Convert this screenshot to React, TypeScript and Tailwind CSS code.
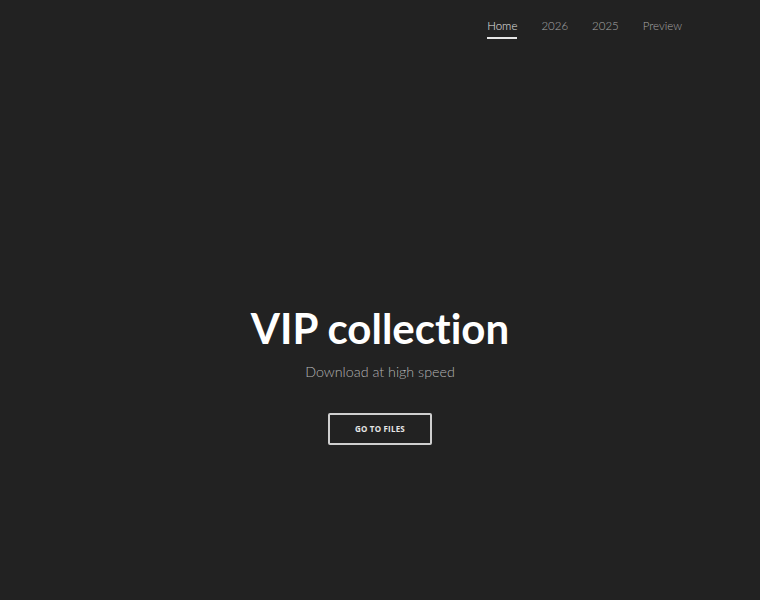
const links = ["Home", "2026", "2025", "Preview"];

export default function App() {
  return (
    <div className="flex h-[600px] w-full flex-col bg-[#222222] font-['Lato','Open_Sans',sans-serif]">
      <nav className="flex justify-end gap-[24px] pr-[78px] pt-[18px]">
        {links.map((l, i) => (
          <a
            key={l}
            className={
              "flex flex-col items-center text-[11.5px] leading-[16px] font-light " +
              (i === 0 ? "text-[#e6e6e6]" : "text-[#a8a8a8]")
            }
          >
            {l}
            <span className={"mt-[3px] h-[2px] w-full " + (i === 0 ? "bg-[#e6e6e6]" : "bg-transparent")} />
          </a>
        ))}
      </nav>
      <main className="flex flex-1 flex-col items-center pt-[265px]">
        <h1 className="text-[42px] leading-[48px] font-bold text-white [font-variant-ligatures:none]">VIP collection</h1>
        <p className="mt-[10px] text-[14.3px] leading-[20px] font-light text-[#b3b3b3]">Download at high speed</p>
        <a className="mt-[31px] flex h-[32px] w-[104px] items-center justify-center rounded-[2px] border-2 border-[#cfcfcf] font-['Open_Sans',sans-serif] text-[8px] font-bold tracking-[0.2px] text-[#e6e6e6]">
          GO TO FILES
        </a>
      </main>
    </div>
  );
}
